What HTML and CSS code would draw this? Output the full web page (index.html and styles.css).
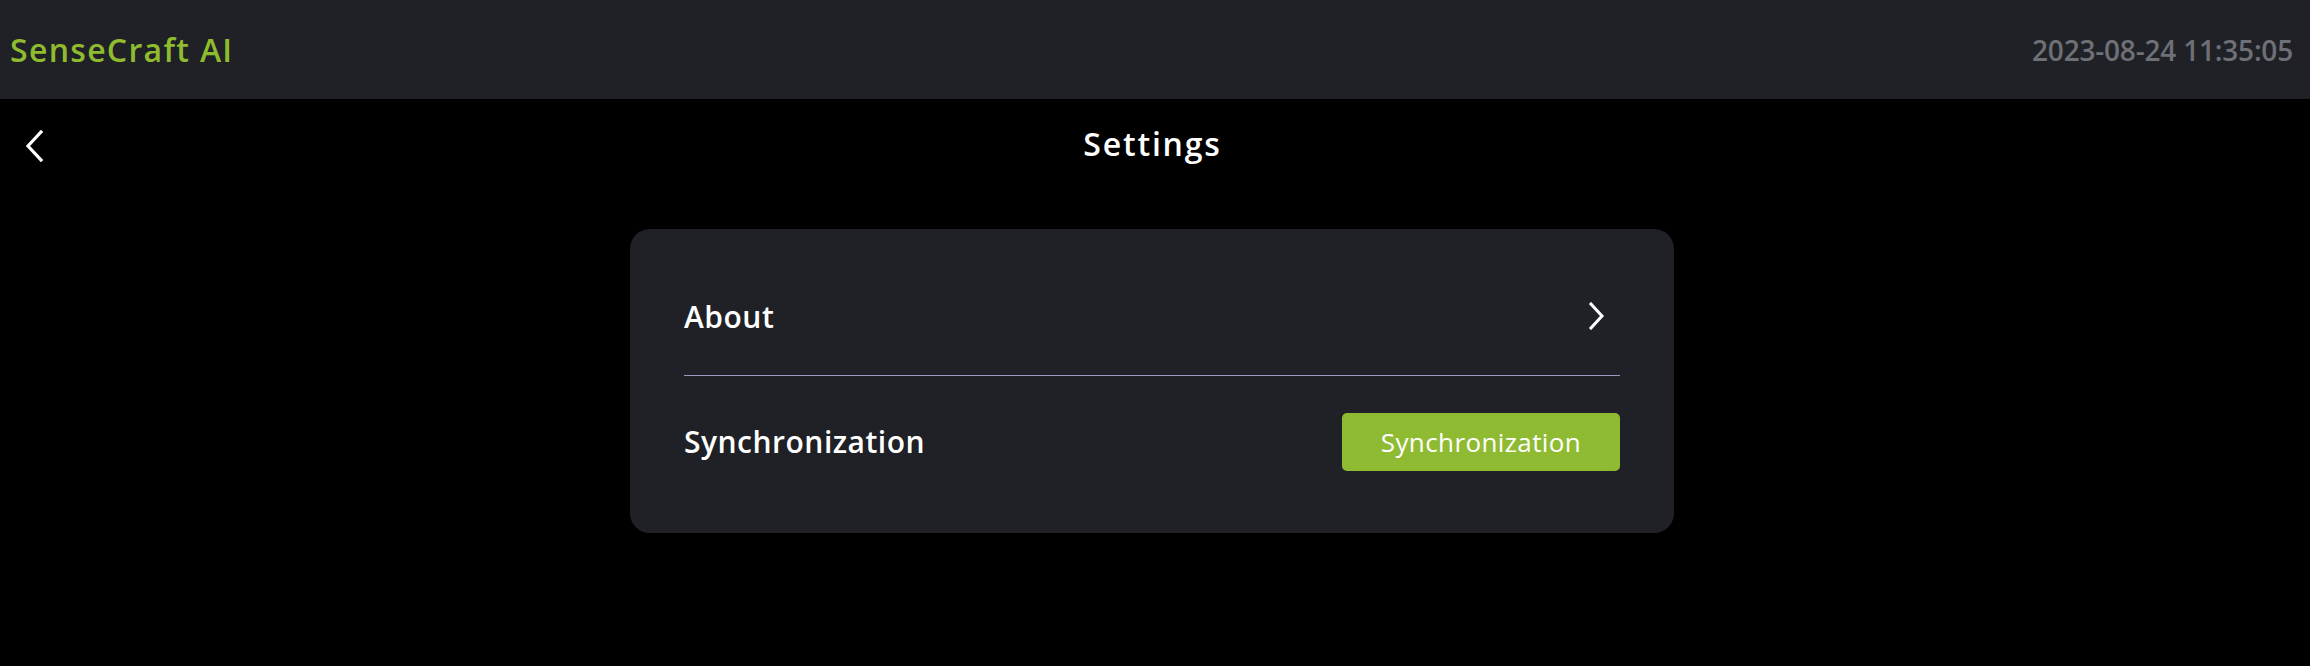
FILE: index.html
```html
<!DOCTYPE html>
<html lang="en">
<head>
<meta charset="utf-8">
<title>SenseCraft AI - Settings</title>
<link rel="stylesheet" href="styles.css">
</head>
<body>
<header class="topbar">
  <div class="brand">SenseCraft AI</div>
  <div class="clock">2023-08-24 11:35:05</div>
</header>
<nav class="navbar">
  <button class="back" aria-label="Back">
    <svg width="20" height="32" viewBox="0 0 20 32"><path d="M16 2 L3 16 L16 30" fill="none" stroke="#ffffff" stroke-width="3.2" stroke-linecap="square"/></svg>
  </button>
  <h1 class="page-title">Settings</h1>
  <span class="nav-spacer"></span>
</nav>
<main class="content">
  <section class="card">
    <div class="row row-about">
      <span class="row-label">About</span>
      <svg class="chev" width="18" height="28" viewBox="0 0 18 28"><path d="M3 2 L14 14 L3 26" fill="none" stroke="#ffffff" stroke-width="3" stroke-linecap="square"/></svg>
    </div>
    <div class="divider"></div>
    <div class="row row-sync">
      <span class="row-label">Synchronization</span>
      <button class="sync-btn">Synchronization</button>
    </div>
  </section>
</main>
</body>
</html>
```
FILE: styles.css
```css
* { box-sizing: border-box; }
html, body { margin: 0; padding: 0; }
body {
  background: #000000;
  width: 2310px;
  height: 666px;
  font-family: "Open Sans", "Noto Sans", sans-serif;
  color: #ffffff;
  overflow: hidden;
}
.topbar {
  height: 99px;
  background: #202126;
  display: flex;
  align-items: center;
  justify-content: space-between;
  padding: 0 17px 0 10px;
}
.brand {
  color: #8fbc2f;
  font-size: 32px;
  font-weight: 600;
  letter-spacing: 1.3px;
}
.clock {
  color: #6e6f77;
  font-size: 28px;
  font-weight: 600;
  letter-spacing: -0.2px;
}
.navbar {
  height: 89px;
  display: flex;
  align-items: center;
  padding: 0 20px 0 25px;
}
.back {
  background: none;
  border: 0;
  padding: 0;
  width: 24px;
  display: flex;
  align-items: center;
  margin-top: 4px;
}
.page-title {
  flex: 1;
  margin: 0;
  text-align: center;
  font-size: 32px;
  font-weight: 600;
  letter-spacing: 1.8px;
  padding-right: 10px;
}
.nav-spacer { width: 24px; }
.content {
  display: flex;
  justify-content: center;
  padding: 41px 6px 0 0;
}
.card {
  width: 1044px;
  height: 304px;
  background: #202126;
  border-radius: 20px;
  padding: 28px 54px 0 54px;
}
.row {
  display: flex;
  align-items: center;
  justify-content: space-between;
}
.row-about { height: 118px; }
.row-sync { height: 130px; }
.row-label {
  font-size: 30px;
  font-weight: 600;
  letter-spacing: 0.5px;
}
.chev { margin-right: 14px; }
.divider {
  height: 1px;
  background: #9d9cc0;
}
.sync-btn {
  width: 278px;
  height: 58px;
  background: #8fbb33;
  border: 0;
  border-radius: 5px;
  color: #ffffff;
  font-family: inherit;
  font-size: 26px;
  font-weight: 400;
  letter-spacing: 0.4px;
  margin-top: 1px;
}
```
